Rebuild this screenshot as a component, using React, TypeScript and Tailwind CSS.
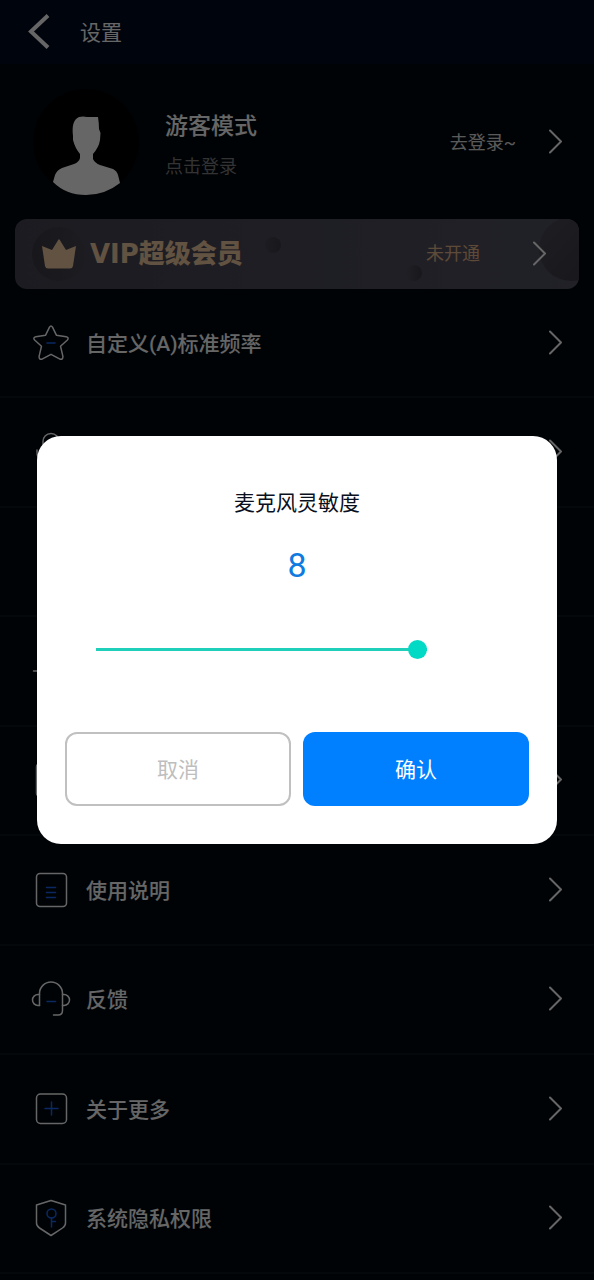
import React, { useState } from 'react';

const Chevron: React.FC = () => (
  <svg width="14" height="26" viewBox="0 0 14 26" fill="none" stroke="currentColor" strokeWidth="2" strokeLinecap="round" strokeLinejoin="round" className="shrink-0" aria-hidden="true">
    <path d="M1 1.5 12 12.500 1 23.500" />
  </svg>
);

const RowIcon: React.FC<{ children?: React.ReactNode }> = ({ children }) => (
  <svg width="40" height="40" viewBox="0 0 40 40" fill="none" stroke="currentColor" strokeWidth="1.5" strokeLinecap="round" strokeLinejoin="round" className="shrink-0" aria-hidden="true">
    {children}
  </svg>
);

const accent = '#1a66f5';

const StarIcon = () => (
  <RowIcon>
    <path d="M18.5 4.2Q20 1.8 21.5 4.2L25.4 12.2 35.2 13.7Q38.4 14.6 36.4 17L29.5 23.2 31.9 33.4Q32 37 29 36.2L20 31.3 11 36.2Q8 37 8.1 33.4L10.5 23.2 3.6 17Q1.6 14.6 4.8 13.7L14.6 12.2Z" />
    <path d="M16 20h8" stroke={accent} />
  </RowIcon>
);

const MicIcon = () => (
  <RowIcon>
    <rect x="12" y="1.5" width="16" height="24" rx="8" />
    <path d="M6 18v2a14 13 0 0 0 28 0v-2M20 33v5" />
  </RowIcon>
);

const NoteIcon = () => (
  <RowIcon>
    <circle cx="14" cy="29" r="5" />
    <path d="M19 29V8l11 4" />
  </RowIcon>
);

const LineIcon = () => (
  <RowIcon>
    <path d="M2.5 20h35" />
    <path d="M16 26h8" stroke={accent} />
  </RowIcon>
);

const CardIcon = () => (
  <RowIcon>
    <rect x="5.5" y="4" width="29" height="32" rx="3" />
  </RowIcon>
);

const DocIcon = () => (
  <RowIcon>
    <rect x="5.5" y="3.5" width="30" height="33" rx="3.5" />
    <path d="M15.5 17.5h9M15.5 22.5h9M15.5 27.5h9" stroke={accent} />
  </RowIcon>
);

const HeadsetIcon = () => (
  <RowIcon>
    <path d="M8.5 26.5V14.5a11.5 11.5 0 0 1 23 0V31.5q0 4.5-4.5 4.5H22.5" />
    <path d="M8.5 15.5H7a5.500 5.500 0 0 0 0 11h1.500M31.5 15.5H33a5.500 5.500 0 0 1 0 11h-1.500" />
    <path d="M16 22.5h8.500" stroke={accent} />
  </RowIcon>
);

const PlusIcon = () => (
  <RowIcon>
    <rect x="5.5" y="5" width="30" height="29.5" rx="4" />
    <path d="M14 19.5h13M20.5 13v13" stroke={accent} />
  </RowIcon>
);

const ShieldIcon = () => (
  <RowIcon>
    <path d="M20 2.5 34.5 7V25q0 3-3 5L20 37.5 8.5 30q-3-2-3-5V7Z" />
    <g stroke={accent}>
      <circle cx="20.5" cy="15.5" r="4.5" />
      <path d="M20.5 20v9M20.5 23.5h4" />
    </g>
  </RowIcon>
);

interface SettingItem {
  id: string;
  label?: string;
  icon: React.ReactNode;
  arrow: boolean;
}

const items: SettingItem[] = [
  { id: 'pitch', label: '自定义(A)标准频率', icon: <StarIcon />, arrow: true },
  { id: 'mic', icon: <MicIcon />, arrow: true },
  { id: 'sound', icon: <NoteIcon />, arrow: false },
  { id: 'line', icon: <LineIcon />, arrow: false },
  { id: 'card', icon: <CardIcon />, arrow: true },
  { id: 'guide', label: '使用说明', icon: <DocIcon />, arrow: true },
  { id: 'feedback', label: '反馈', icon: <HeadsetIcon />, arrow: true },
  { id: 'about', label: '关于更多', icon: <PlusIcon />, arrow: true },
  { id: 'privacy', label: '系统隐私权限', icon: <ShieldIcon />, arrow: true },
];

const Avatar: React.FC = () => (
  <svg width="106" height="106" viewBox="0 0 106 106" className="shrink-0" aria-hidden="true">
    <circle cx="53" cy="53" r="53" fill="#000" />
    <path
      fill="currentColor"
      d="M40 47C39 37 40 31 46 28Q50 27 54 28L65 28Q66 34 66 40L67.5 44 67 51Q66 58 60 65V70Q62 74 67 76L80 80Q84 82 85 86L87 94Q72 106 53 106 33 106 20 93L22 86Q24 81 29 79L41 75Q46 73 47 69V65Q42 59 40 51Z"
    />
  </svg>
);

const VipBanner: React.FC = () => (
  <a href="#vip" className="relative mx-[15px] flex h-[70px] items-center overflow-hidden rounded-xl bg-linear-to-r from-[#464553] to-[#535363] pl-[17px] pr-8">
    <span className="absolute -right-6 -top-0.5 size-16 rounded-full bg-linear-to-br from-[#4c4b58] to-[#3b3944]" />
    <span className="absolute right-[157px] top-[46px] size-4 rounded-full bg-linear-to-r from-[#504f5c] to-[#3c3b47]" />
    <span className="absolute left-[250px] top-[18px] size-4 rounded-full bg-linear-to-r from-[#484754] to-[#3c3b47]" />
    <span className="flex size-[54px] shrink-0 items-center justify-center rounded-full bg-linear-to-r from-[#3d3c46] to-[#474653]">
      <svg width="34" height="30" viewBox="0 0 34 30" fill="#f2cda3" aria-hidden="true">
        <path d="M0 7 10 11 16.5 .5Q17 0 17.5 .5L24 11 34 7 31 27Q30.500 29.500 28 29.500H6Q3.500 29.500 3 27Z" />
      </svg>
    </span>
    <span className="ml-1 whitespace-nowrap font-['DejaVu_Sans','Noto_Sans_CJK_SC',sans-serif] text-[26px] font-black leading-8 text-[#f2cda3]">VIP超级会员</span>
    <span className="relative ml-auto mr-[53px] text-lg text-[#e8b88c]">未开通</span>
    <span className="relative flex">
      <Chevron />
    </span>
  </a>
);

const SensitivityDialog: React.FC = () => {
  const [value, setValue] = useState(8);

  return (
    <div className="fixed inset-0 flex items-center justify-center bg-black/60 px-[37px]">
      <div role="dialog" aria-modal="true" aria-labelledby="dialog-title" className="w-full rounded-3xl bg-white px-7 pb-[38px] pt-[53px]">
        <h2 id="dialog-title" className="text-center text-[21px] leading-7 text-[#0a1020]">麦克风灵敏度</h2>
        <p className="mt-7 text-center text-[34px] leading-10 text-[#0f7be0]">{value}</p>
        <div className="ml-[31px] mr-[102px] mt-[54px] flex">
          <input
            type="range"
            min={0}
            max={8}
            value={value}
            onChange={e => setValue(Number(e.target.value))}
            aria-labelledby="dialog-title"
            className="h-5 w-full appearance-none bg-transparent [&::-webkit-slider-runnable-track]:h-[3px] [&::-webkit-slider-runnable-track]:bg-[#1fcfba] [&::-webkit-slider-thumb]:-mt-2 [&::-webkit-slider-thumb]:size-[19px] [&::-webkit-slider-thumb]:appearance-none [&::-webkit-slider-thumb]:rounded-full [&::-webkit-slider-thumb]:bg-[#03dac5]"
          />
        </div>
        <div className="mt-[73px] grid grid-cols-2 gap-3 text-[21px]">
          <button type="button" className="h-[74px] rounded-xl border-2 border-[#c0c0c0] pt-1 text-[#bebebe]">取消</button>
          <button type="button" className="h-[74px] rounded-xl bg-[#0080ff] pt-1 text-white">确认</button>
        </div>
      </div>
    </div>
  );
};

const App: React.FC = () => (
  <div className="flex min-h-screen flex-col bg-[#00080f] pb-1.5 font-[Roboto,'Noto_Sans_CJK_SC',sans-serif] text-white">
    <header className="flex h-16 items-center bg-[#000a20] pl-7">
      <button type="button" aria-label="返回">
        <svg width="22" height="36" viewBox="0 0 22 36" fill="none" stroke="currentColor" strokeWidth="4" aria-hidden="true">
          <path d="M20 1.5 3 17.5 20 33.5" />
        </svg>
      </button>
      <h1 className="ml-[30px] pt-0.5 text-[21px] leading-7">设置</h1>
    </header>

    <a href="#login" className="flex h-[155px] items-center pl-[33px] pr-[31px]">
      <Avatar />
      <div className="ml-[26px] pt-1">
        <p className="text-[23px] font-medium leading-10">游客模式</p>
        <p className="mt-1.5 text-lg text-[#808080]">点击登录</p>
      </div>
      <span className="ml-auto mr-[33px] pt-0.5 text-lg text-[#e0e0e0]">去登录~</span>
      <Chevron />
    </a>

    <VipBanner />

    <ul className="flex flex-1 flex-col">
      {items.map(item => (
        <li key={item.id} className="flex min-h-24 flex-1 border-b-2 border-[#0b141b]">
          <a href={`#${item.id}`} className="flex flex-1 items-center pl-[31px] pr-[31px]">
            {item.icon}
            {item.label && <span className="ml-[15px] pt-0.5 text-[21px] font-medium leading-7">{item.label}</span>}
            {item.arrow && (
              <span className="ml-auto">
                <Chevron />
              </span>
            )}
          </a>
        </li>
      ))}
    </ul>

    <SensitivityDialog />
  </div>
);

export default App;
